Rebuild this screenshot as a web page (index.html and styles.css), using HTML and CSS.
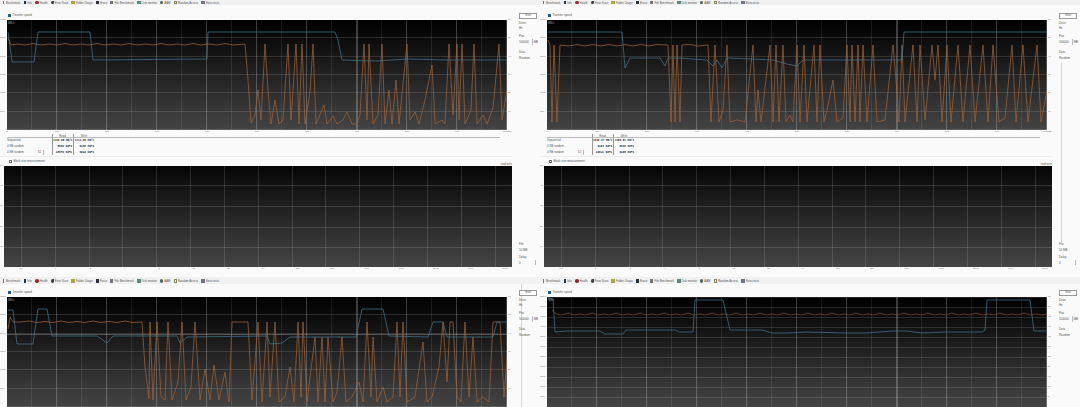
FILE: index.html
```html
<!DOCTYPE html>
<html lang="en">
<head>
  <title>HD Tune Pro - file benchmark</title>
  <link rel="stylesheet" href="styles.css">
</head>
<body>
<div class="desk">

  <!-- top left -->
  <section class="pane">
    <nav class="tool-bar">
      <span class="tool"><i class="ico ico-bench"></i>Benchmark</span>
      <span class="tool"><i class="ico ico-info"></i>Info</span>
      <span class="tool"><i class="ico ico-health"></i>Health</span>
      <span class="tool"><i class="ico ico-scan"></i>Error Scan</span>
      <span class="tool"><i class="ico ico-folder"></i>Folder Usage</span>
      <span class="tool"><i class="ico ico-erase"></i>Erase</span>
      <span class="tool"><i class="ico ico-file"></i>File Benchmark</span>
      <span class="tool"><i class="ico ico-disk"></i>Disk monitor</span>
      <span class="tool"><i class="ico ico-aam"></i>AAM</span>
      <span class="tool"><i class="ico ico-random"></i>Random Access</span>
      <span class="tool"><i class="ico ico-extra"></i>Extra tests</span>
    </nav>
    <div class="tab">
      <div class="tab-main">
        <div class="speed-head"><i class="check check-on"></i>Transfer speed</div>
        <div class="chart-row">
          <div class="y-axis"><span>3000</span><span>2500</span><span>2000</span><span>1500</span><span>1000</span><span>500</span></div>
          <div class="plot">
            <svg width="500" height="110">
              <text class="plot-unit" x="1" y="3.5">MB/s</text>
              <polyline class="line-write" points="1,18 4,25 10,24 18,25 26,23.5 34,25 42,24 50,25 58,23.5 66,25 74,24 82,25 90,23.5 98,25 106,24 114,25 122,23.5 130,25 138,24 146,25 154,23.5 162,25 170,24 178,25 186,23.5 194,25 202,24 210,25 218,23.5 226,25 238,24 241,60 244,103 248,95 251,70 254,100 258,24 261,70 264,104 268,80 272,104 276,100 281,24 284,100 289,24 292,104 295,24 298,104 303,72 306,24 309,104 317,85 320,104 326,96 330,104 336,100 340,92 345,104 350,104 353,95 357,24 360,100 362,24 366,104 371,95 375,24 378,104 382,70 385,104 389,60 392,104 400,24 403,100 408,92 412,104 418,80 425,45 428,104 435,100 438,104 442,24 446,95 450,24 452,100 455,24 458,104 464,90 467,24 470,104 476,95 480,104 486,88 492,24 495,100 500,70"/>
              <polyline class="line-read" points="1,12 5,42 27,42 31,12 83,12 86,40 200,39 201,12 328,12 331,20 335,40 370,41 400,39 440,40 500,40"/>
            </svg>
          </div>
          <div class="y-axis y-axis-right"><span>60</span><span>50</span><span>40</span><span>30</span><span>20</span><span>10</span></div>
        </div>
        <div class="x-axis"><span>0</span><span>100</span><span>200</span><span>300</span><span>400</span><span>500</span><span>600</span><span>700</span><span>800</span><span>900</span><span>1000gB</span></div>
        <div class="results">
          <span></span><span class="cell-head">Read</span><span class="cell-head">Write</span><span class="cell-rule"></span>
          <span>Sequential</span><b>1169.05 MB/s</b><b>1113.88 MB/s</b><span></span>
          <span>4 KB random</span><b>8884 IOPS</b><b>6298 IOPS</b><span></span>
          <span class="row-spin">4 KB random <i class="spin">32</i></span><b>48876 IOPS</b><b>9044 IOPS</b><span></span>
        </div>
        <div class="block-head">
          <span class="block-check"><i class="check"></i>Block size measurement</span>
          <span class="block-legend">read write</span>
        </div>
        <div class="chart-row">
          <div class="y-axis y-axis-narrow"><span>50</span><span>40</span><span>30</span><span>20</span><span>10</span></div>
          <div class="plot plot-block"></div>
        </div>
        <div class="x-axis x-axis-block"><span>0.5</span><span>1</span><span>2</span><span>4</span><span>8</span><span>16</span><span>32</span><span>64</span><span>128</span><span>256</span><span>512</span><span>1024</span><span>2048</span><span>4096</span><span>8192</span></div>
      </div>
      <aside class="tab-side">
        <button class="start">Start</button>
        <label>Drive</label><div class="pick">Hx</div>
        <label>Pos</label><div class="size"><span>100000</span><i class="spin"></i><span>MB</span></div>
        <label>Data</label><div class="pick">Random</div>
        <div class="side-fill"></div>
        <label>File</label><div class="pick">10 MB</div>
        <label>Delay</label><div class="pick">0<i class="spin"></i></div>
      </aside>
    </div>
  </section>

  <!-- top right -->
  <section class="pane">
    <nav class="tool-bar">
      <span class="tool"><i class="ico ico-bench"></i>Benchmark</span>
      <span class="tool"><i class="ico ico-info"></i>Info</span>
      <span class="tool"><i class="ico ico-health"></i>Health</span>
      <span class="tool"><i class="ico ico-scan"></i>Error Scan</span>
      <span class="tool"><i class="ico ico-folder"></i>Folder Usage</span>
      <span class="tool"><i class="ico ico-erase"></i>Erase</span>
      <span class="tool"><i class="ico ico-file"></i>File Benchmark</span>
      <span class="tool"><i class="ico ico-disk"></i>Disk monitor</span>
      <span class="tool"><i class="ico ico-aam"></i>AAM</span>
      <span class="tool"><i class="ico ico-random"></i>Random Access</span>
      <span class="tool"><i class="ico ico-extra"></i>Extra tests</span>
    </nav>
    <div class="tab">
      <div class="tab-main">
        <div class="speed-head"><i class="check check-on"></i>Transfer speed</div>
        <div class="chart-row">
          <div class="y-axis"><span>3000</span><span>2500</span><span>2000</span><span>1500</span><span>1000</span><span>500</span></div>
          <div class="plot">
            <svg width="500" height="110">
              <text class="plot-unit" x="1" y="3.5">MB/s</text>
              <polyline class="line-write" points="1,20 3,25 5,102 7,25 10,102 13,25 22,26 30,24.5 38,26 46,24.5 54,26 62,24.5 70,26 78,24.5 86,26 94,24.5 102,26 110,24.5 121,25 124,102 126,25 128,102 130,25 133,102 135,25 143,24.5 151,26 161,25 164,102 168,25 172,102 176,90 180,25 183,102 190,100 198,102 206,25 209,102 211,70 214,102 223,25 226,102 229,25 232,102 236,25 239,102 243,95 246,102 250,25 253,102 257,25 260,102 267,25 270,102 273,25 277,102 280,90 286,60 290,102 296,98 300,25 303,102 305,25 308,102 311,25 313,102 316,25 320,102 326,25 330,102 338,100 346,25 349,60 352,102 355,25 358,102 366,25 370,102 373,25 378,100 385,25 388,60 391,25 395,102 400,25 404,102 411,25 416,102 423,25 428,102 436,25 441,102 446,25 452,102 458,98 465,25 469,102 476,25 481,102 490,25 494,102 500,70"/>
              <polyline class="line-read" points="1,12 75,12 78,48 83,38 113,38 118,46 121,38 130,38 160,40 166,46 170,40 175,48 180,38 226,40 240,44 250,46 256,40 300,40 355,40 357,12 500,12"/>
            </svg>
          </div>
          <div class="y-axis y-axis-right"><span>60</span><span>50</span><span>40</span><span>30</span><span>20</span><span>10</span></div>
        </div>
        <div class="x-axis"><span>0</span><span>100</span><span>200</span><span>300</span><span>400</span><span>500</span><span>600</span><span>700</span><span>800</span><span>900</span><span>1000gB</span></div>
        <div class="results">
          <span></span><span class="cell-head">Read</span><span class="cell-head">Write</span><span class="cell-rule"></span>
          <span>Sequential</span><b>1820.97 MB/s</b><b>1150.51 MB/s</b><span></span>
          <span>4 KB random</span><b>9463 IOPS</b><b>6990 IOPS</b><span></span>
          <span class="row-spin">4 KB random <i class="spin">32</i></span><b>49841 IOPS</b><b>9408 IOPS</b><span></span>
        </div>
        <div class="block-head">
          <span class="block-check"><i class="check"></i>Block size measurement</span>
          <span class="block-legend">read write</span>
        </div>
        <div class="chart-row">
          <div class="y-axis y-axis-narrow"><span>50</span><span>40</span><span>30</span><span>20</span><span>10</span></div>
          <div class="plot plot-block"></div>
        </div>
        <div class="x-axis x-axis-block"><span>0.5</span><span>1</span><span>2</span><span>4</span><span>8</span><span>16</span><span>32</span><span>64</span><span>128</span><span>256</span><span>512</span><span>1024</span><span>2048</span><span>4096</span><span>8192</span></div>
      </div>
      <aside class="tab-side">
        <button class="start">Start</button>
        <label>Drive</label><div class="pick">Hx</div>
        <label>Pos</label><div class="size"><span>100000</span><i class="spin"></i><span>MB</span></div>
        <label>Data</label><div class="pick">Random</div>
        <div class="side-fill side-ruled"></div>
        <label>File</label><div class="pick">10 MB</div>
        <label>Delay</label><div class="pick">0<i class="spin"></i></div>
      </aside>
    </div>
  </section>

  <!-- bottom left -->
  <section class="pane">
    <nav class="tool-bar tool-bar-low">
      <span class="tool"><i class="ico ico-bench"></i>Benchmark</span>
      <span class="tool"><i class="ico ico-info"></i>Info</span>
      <span class="tool"><i class="ico ico-health"></i>Health</span>
      <span class="tool"><i class="ico ico-scan"></i>Error Scan</span>
      <span class="tool"><i class="ico ico-folder"></i>Folder Usage</span>
      <span class="tool"><i class="ico ico-erase"></i>Erase</span>
      <span class="tool"><i class="ico ico-file"></i>File Benchmark</span>
      <span class="tool"><i class="ico ico-disk"></i>Disk monitor</span>
      <span class="tool"><i class="ico ico-aam"></i>AAM</span>
      <span class="tool"><i class="ico ico-random"></i>Random Access</span>
      <span class="tool"><i class="ico ico-extra"></i>Extra tests</span>
    </nav>
    <div class="tab">
      <div class="tab-main">
        <div class="speed-head speed-head-low"><i class="check check-on"></i>Transfer speed</div>
        <div class="chart-row">
          <div class="y-axis"><span>3000</span><span>2500</span><span>2000</span><span>1500</span><span>1000</span><span>500</span></div>
          <div class="plot plot-low">
            <svg width="500" height="110">
              <text class="plot-unit" x="1" y="3.5">MB/s</text>
              <polyline class="line-write" points="1,32 3,20 6,25 14,25 22,24 30,25.5 38,24.5 46,25.5 54,24 62,25.5 70,24.5 78,25.5 86,24 94,25.5 102,24.5 110,25.5 118,24 126,25.5 135,25 138,70 142,102 143,25 146,103 150,25 154,100 158,103 161,25 165,103 171,85 175,25 179,103 184,90 188,25 193,103 198,72 203,103 207,68 212,103 218,75 222,105 225,25 241,25 245,103 251,25 255,105 260,25 263,100 268,25 272,105 278,100 283,70 287,105 291,25 294,100 296,25 300,105 308,40 311,105 315,40 318,105 321,40 326,105 330,95 335,40 339,105 345,100 352,85 356,105 360,25 364,100 366,40 370,105 376,90 380,105 386,100 390,25 393,100 396,25 400,105 408,100 416,45 420,105 425,100 432,70 436,25 440,85 443,25 446,25 450,100 454,105 458,25 462,100 466,40 470,105 476,100 482,105 486,25 493,25 497,100 500,60"/>
              <polyline class="line-read" points="1,13 6,13 10,47 26,47 31,12 40,12 45,39 90,39 100,46 106,39 170,39 173,46 180,40 260,39 263,47 275,46 283,40 349,40 355,12 376,12 382,39 421,40 426,25 436,25 440,40 486,40 490,25 500,25"/>
            </svg>
          </div>
          <div class="y-axis y-axis-right"><span>60</span><span>50</span><span>40</span><span>30</span><span>20</span><span>10</span></div>
        </div>
      </div>
      <aside class="tab-side tab-side-low side-ruled">
        <button class="start">Start</button>
        <label>Drive</label><div class="pick">Hx</div>
        <label>Pos</label><div class="size"><span>100000</span><i class="spin"></i><span>MB</span></div>
        <label>Data</label><div class="pick">Random</div>
      </aside>
    </div>
  </section>

  <!-- bottom right -->
  <section class="pane">
    <nav class="tool-bar tool-bar-low">
      <span class="tool"><i class="ico ico-bench"></i>Benchmark</span>
      <span class="tool"><i class="ico ico-info"></i>Info</span>
      <span class="tool"><i class="ico ico-health"></i>Health</span>
      <span class="tool"><i class="ico ico-scan"></i>Error Scan</span>
      <span class="tool"><i class="ico ico-folder"></i>Folder Usage</span>
      <span class="tool"><i class="ico ico-erase"></i>Erase</span>
      <span class="tool"><i class="ico ico-file"></i>File Benchmark</span>
      <span class="tool"><i class="ico ico-disk"></i>Disk monitor</span>
      <span class="tool"><i class="ico ico-aam"></i>AAM</span>
      <span class="tool"><i class="ico ico-random"></i>Random Access</span>
      <span class="tool"><i class="ico ico-extra"></i>Extra tests</span>
    </nav>
    <div class="tab">
      <div class="tab-main">
        <div class="speed-head speed-head-low"><i class="check check-on"></i>Transfer speed</div>
        <div class="chart-row">
          <div class="y-axis y-axis-fine"><span>5500</span><span>5000</span><span>4500</span><span>4000</span><span>3500</span><span>3000</span><span>2500</span><span>2000</span><span>1500</span><span>1000</span><span>500</span></div>
          <div class="plot plot-low plot-fine">
            <svg width="500" height="110">
              <text class="plot-unit" x="1" y="3.5">MB/s</text>
              <polyline class="line-write line-write-dim" points="5,13 9,17 15,18 21,16 27,18 33,17 39,18 45,16 51,18 57,17 63,18 69,16 75,18 81,17 87,18 93,16 99,18 105,17 111,18 117,16 123,18 129,17 135,18 141,16 147,18 153,17 159,18 165,16 171,18 177,17 183,18 189,16 195,18 201,17 207,18 213,16 219,18 225,17 231,18 237,16 243,18 249,17 255,18 261,16 267,18 273,17 279,18 285,16 291,18 297,17 303,18 309,16 315,18 321,17 327,18 333,16 339,18 345,17 351,18 357,16 363,18 369,17 375,18 381,16 387,18 393,17 399,18 405,16 411,18 417,17 423,18 429,16 435,18 441,17 447,18 453,16 459,18 465,17 471,18 477,16 483,18 489,17 495,18 500,17"/>
              <polyline class="line-read" points="1,1 6,2 8,35 20,34 53,34 58,37 76,37 79,33 128,33 132,35 146,35 148,3 176,3 183,33 215,33 225,36 240,36 260,35 300,36 320,36 345,34 360,34 375,36 400,35 435,35 438,33 440,3 483,3 487,34 500,34"/>
            </svg>
          </div>
          <div class="y-axis y-axis-right y-axis-fine"><span>55</span><span>50</span><span>45</span><span>40</span><span>35</span><span>30</span><span>25</span><span>20</span><span>15</span><span>10</span><span>5</span></div>
        </div>
      </div>
      <aside class="tab-side tab-side-low">
        <button class="start">Start</button>
        <label>Drive</label><div class="pick">Hx</div>
        <label>Pos</label><div class="size"><span>100000</span><i class="spin"></i><span>MB</span></div>
        <label>Data</label><div class="pick">Random</div>
      </aside>
    </div>
  </section>

</div>
</body>
</html>
```

FILE: styles.css
```css
html, body {
  margin: 0;
  height: 100%;
  overflow: hidden;
}

body {
  background: #f0f0f0;
  color: #555;
  font-family: "Liberation Sans", Arial, sans-serif;
  font-size: 2.9px;
}

.desk {
  display: grid;
  grid-template-columns: 540px 540px;
  grid-template-rows: 277px 130px;
}

.pane {
  display: flex;
  flex-direction: column;
  overflow: hidden;
}

/* toolbar */
.tool-bar {
  display: flex;
  flex: none;
  align-items: center;
  gap: 3.2px;
  height: 5px;
  padding-left: 2px;
  background: #f1f1f1;
  font-size: 2.8px;
  white-space: nowrap;
}

.tool-bar-low {
  height: 7px;
  padding-top: 1px;
  box-sizing: border-box;
}

.tool {
  display: flex;
  align-items: center;
  gap: 1px;
}

.ico {
  display: block;
  width: 3px;
  height: 3.5px;
  background: #555;
}

.ico-bench { width: 1px; margin: 0 1px; background: #8a7a30; }
.ico-info { width: 1.5px; margin: 0 .7px; background: #24324e; }
.ico-health { width: 3.5px; border-radius: 50%; background: #8e2b35; }
.ico-scan { background: #39424e; border-radius: 50% 0 50% 50%; }
.ico-folder { width: 3.5px; background: #a8a83c; }
.ico-erase { background: #2c3038; }
.ico-file { background: #6f7680; }
.ico-disk { width: 3.5px; background: #5c8a7e; }
.ico-aam { background: #4f6460; border-radius: 50%; }
.ico-random { box-sizing: border-box; width: 3.5px; border: .6px solid #8a8a66; background: #f4f1d8; }
.ico-extra { width: 3.5px; background: #6d7684; }

/* tab body */
.tab {
  display: flex;
  flex: 1;
  background: #fafafa;
}

.tab-main {
  flex: none;
  width: 519px;
}

.tab-side {
  display: flex;
  flex: 1;
  flex-direction: column;
  align-items: flex-start;
  height: 255px;
  padding-top: 8px;
}

.tab-side-low {
  padding-top: 6px;
}

.side-ruled {
  background: linear-gradient(#d4d4d4, #d4d4d4) 1.5px 0 / 1px 100% no-repeat;
}

.side-fill {
  flex: 1;
  align-self: stretch;
}

.speed-head {
  display: flex;
  align-items: center;
  gap: 1.5px;
  box-sizing: border-box;
  height: 15px;
  padding: 5px 0 0 8px;
}

.speed-head-low {
  height: 13px;
  padding-top: 3px;
}

.check {
  display: block;
  box-sizing: border-box;
  width: 3px;
  height: 3px;
  border: .5px solid #777;
  background: #fff;
}

.check-on {
  border-color: #2d5a80;
  background: #2d5a80;
}

/* charts */
.chart-row {
  display: flex;
}

.plot {
  flex: none;
  width: 500px;
  height: 110px;
  background:
    linear-gradient(rgba(255, 255, 255, .22), rgba(255, 255, 255, .22)) 350px 0 / 1px 100% no-repeat,
    repeating-linear-gradient(90deg, transparent 0 49px, rgba(255, 255, 255, .16) 49px 50px),
    repeating-linear-gradient(90deg, transparent 0 24px, rgba(255, 255, 255, .08) 24px 25px),
    repeating-linear-gradient(180deg, transparent 0 17.33px, rgba(255, 255, 255, .12) 17.33px 18.33px),
    linear-gradient(#000, #444);
}

.plot svg {
  display: block;
}

.plot-low {
  background:
    linear-gradient(rgba(255, 255, 255, .22), rgba(255, 255, 255, .22)) 350px 0 / 1px 100% no-repeat,
    linear-gradient(rgba(255, 255, 255, .25), rgba(255, 255, 255, .25)) 0 37px / 100% 1px no-repeat,
    repeating-linear-gradient(90deg, transparent 0 49px, rgba(255, 255, 255, .16) 49px 50px),
    repeating-linear-gradient(90deg, transparent 0 24px, rgba(255, 255, 255, .08) 24px 25px),
    repeating-linear-gradient(180deg, transparent 0 17.33px, rgba(255, 255, 255, .12) 17.33px 18.33px),
    linear-gradient(#000, #444);
}

.plot-fine {
  background:
    linear-gradient(rgba(255, 255, 255, .22), rgba(255, 255, 255, .22)) 350px 0 / 1px 100% no-repeat,
    repeating-linear-gradient(90deg, transparent 0 49px, rgba(255, 255, 255, .16) 49px 50px),
    repeating-linear-gradient(90deg, transparent 0 24px, rgba(255, 255, 255, .08) 24px 25px),
    repeating-linear-gradient(180deg, transparent 0 9px, rgba(255, 255, 255, .12) 9px 10px) 0 1px,
    linear-gradient(#000, #444);
}

.plot-block {
  width: 508px;
  height: 101px;
  background:
    repeating-linear-gradient(90deg, transparent 0 32.85px, rgba(255, 255, 255, .13) 32.85px 33.85px) -16px 0,
    repeating-linear-gradient(180deg, transparent 0 19.5px, rgba(255, 255, 255, .13) 19.5px 20.5px),
    linear-gradient(#060606, #454545);
}

.plot-unit {
  fill: #999;
  font-size: 2.8px;
}

.line-read,
.line-write {
  fill: none;
  stroke-width: .75;
  stroke-linejoin: round;
}

.line-read {
  stroke: #467288;
}

.line-write {
  stroke: #9c6238;
}

.line-write-dim {
  stroke: #7a4a34;
}

/* axes */
.y-axis {
  display: flex;
  flex: none;
  flex-direction: column;
  width: 7px;
  color: #777;
  font-size: 2.5px;
  line-height: 0;
}

.y-axis span {
  flex: 1;
}

.y-axis-right {
  width: 9px;
  padding-left: 1px;
}

.y-axis-narrow {
  width: 4px;
}

.x-axis {
  display: flex;
  justify-content: space-between;
  width: 510px;
  height: 4px;
  padding-left: 2px;
  color: #777;
  font-size: 2.5px;
  line-height: 4px;
}

.x-axis span {
  width: 10px;
  text-align: center;
}

.x-axis-block {
  width: 493.9px;
  padding-left: 16px;
}

/* results table */
.results {
  display: grid;
  grid-template-columns: 45px 21px 22px 405px;
  grid-template-rows: 4px 6px 5.5px 5.5px;
  align-items: stretch;
  height: 22px;
  margin-left: 7px;
  line-height: 5px;
}

.results > b,
.cell-head {
  padding-right: 1px;
  border-left: 1px solid #999;
  color: #333;
  font-family: "Liberation Mono", monospace;
  font-size: 2.7px;
  text-align: right;
  white-space: nowrap;
}

.cell-head {
  border-bottom: 1px solid #bbb;
  color: #555;
  font-family: "Liberation Sans", Arial, sans-serif;
  font-size: 2.8px;
  line-height: 4px;
  text-align: center;
}

.results > span:first-child,
.cell-rule {
  border-bottom: 1px solid #bbb;
}

.row-spin {
  display: flex;
  justify-content: space-between;
  padding-right: 8px;
}

.spin {
  display: inline-block;
  box-sizing: border-box;
  height: 5px;
  padding-right: 2px;
  border-right: 1px solid #bbb;
  font-style: normal;
}

/* block size */
.block-head {
  display: flex;
  justify-content: space-between;
  box-sizing: border-box;
  width: 512px;
  height: 10px;
  padding-left: 9px;
  border-top: 1px solid #eee;
}

.block-check {
  display: flex;
  align-items: center;
  gap: 1.5px;
  height: 8px;
}

.block-legend {
  align-self: flex-end;
  font-size: 2.6px;
  line-height: 2.5px;
}

/* side column */
.start {
  display: block;
  flex: none;
  box-sizing: border-box;
  width: 18px;
  height: 5.5px;
  margin: 0 0 2px;
  padding: 0;
  border: 1px solid #999;
  background: #fff;
  color: #555;
  font: inherit;
  line-height: 3.5px;
}

.tab-side label {
  line-height: 4px;
}

.pick,
.size {
  display: flex;
  flex: none;
  align-items: center;
  justify-content: space-between;
  box-sizing: border-box;
  width: 17px;
  height: 5px;
  margin: 1px 0 3px;
}

.size {
  width: 19px;
  height: 6px;
  margin: 1.5px 0 5px;
}

.size .spin {
  height: 6px;
}
```
